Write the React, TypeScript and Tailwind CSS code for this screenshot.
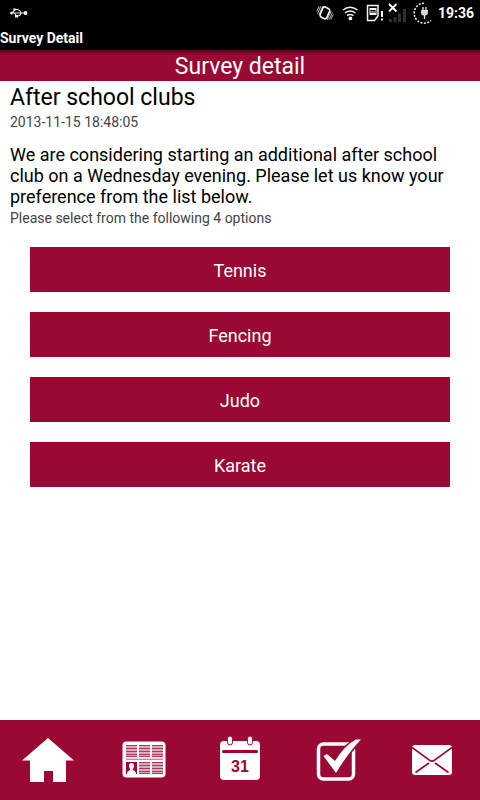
import type { ReactNode } from "react";

const options = ["Tennis", "Fencing", "Judo", "Karate"];

function UsbIcon() {
  return (
    <svg width="20" height="12" viewBox="0 0 20 12" fill="none" stroke="#e4e4e4" strokeWidth="1.1">
      <path d="M3 6H17M4.5 6L7 2.5H9.5Q11.5 3 13.5 6M6.5 6L8.5 9H10Q12 9 13 6.5" />
      <path d="M1.5 6L4.5 4V8Z" fill="#f0f0f0" stroke="none" />
      <circle cx="17.5" cy="6" r="1.9" fill="#ffffff" stroke="none" />
      <circle cx="6.5" cy="2.6" r="1.3" fill="#f0f0f0" stroke="none" />
      <rect x="7" y="8" width="3" height="2.5" fill="#f0f0f0" stroke="none" />
    </svg>
  );
}

function VibrateIcon() {
  return (
    <svg width="18" height="18" viewBox="0 0 18 18" fill="none" stroke="#c8c8c8" strokeWidth="0.9">
      <path d="M6.8 4Q7.8 2.6 9.2 3L13 5Q14.2 6 13.6 7.4L11 13.4Q10 15.2 8.4 14.8L5 13Q3.6 12 4.2 10.4Z" stroke="#f4f4f4" strokeWidth="1.6" />
      <path d="M0.8 7.5L3 2.5M1.6 9.5L4.8 2.2M2.8 11L6.8 2M17.2 10.5L15 15.5M16.4 8.5L13.2 15.8M15.2 7L11.2 16" />
    </svg>
  );
}

function WifiIcon() {
  return (
    <svg width="16" height="16" viewBox="0 0 16 16" fill="none" stroke="#f0f0f0" strokeWidth="1.5">
      <path d="M1 5Q8 -0.5 15.5 5" />
      <path d="M3 8Q8 4 13.5 8" />
      <path d="M5 10.6Q8 8.2 11.5 10.6" />
      <circle cx="8.4" cy="13.4" r="1.9" fill="#ffffff" stroke="none" />
    </svg>
  );
}

function CardAlertIcon() {
  return (
    <svg width="18" height="18" viewBox="0 0 18 18">
      <path d="M1.5 1.5H12V12L8.5 16.5H1.5Z" fill="none" stroke="#f4f4f4" strokeWidth="1.5" />
      <path d="M3.5 4H10.5V6H3.5ZM3.5 6H4.5V9H3.5ZM5.5 7H6.5V9H5.5ZM7.5 7H8.5V9H7.5ZM9.5 6H10.5V9H9.5ZM3.5 9H10.5V11H3.5Z" fill="#f4f4f4" />
      <path d="M15 7H17V13H15ZM15 14.5H17V16.5H15Z" fill="#ffffff" />
    </svg>
  );
}

function SignalIcon() {
  return (
    <svg width="18" height="20" viewBox="0 -2 18 20">
      <path d="M1 14H4V17H1ZM5.5 12H8.5V17H5.5ZM10 8.5H13V17H10ZM15 4H18V17H15Z" fill="#303030" />
      <path d="M1 -1L8.5 6.5M8.5 -1L1 6.5" stroke="#ffffff" strokeWidth="1.9" />
    </svg>
  );
}

function ChargeIcon() {
  return (
    <svg width="22" height="22" viewBox="0 0 22 22">
      <path d="M12 1.2A10 10 0 1 0 19 18.5" fill="none" stroke="#f0f0f0" strokeWidth="1.5" strokeDasharray="2 1.4" />
      <path d="M9 8H16V10Q16 13.5 13.4 13.5H11.6Q9 13.5 9 10Z" fill="#d8d8d8" />
      <path d="M11 5V8M14 5V8M12.5 13V17" stroke="#e8e8e8" strokeWidth="1.3" />
    </svg>
  );
}

function HomeIcon() {
  return (
    <svg width="52" height="46" viewBox="0 0 52 46" fill="#ffffff">
      <path d="M26 1L52 23.5H44V45H31V34H22V45H8V23.5H0Z" />
    </svg>
  );
}

function NewsIcon() {
  return (
    <svg width="44" height="38" viewBox="0 0 44 38">
      <rect x="0.5" y="0.5" width="43" height="36" rx="4" fill="#ffffff" />
      <g fill="#9a0834" fillOpacity="0.35">
        <path d="M4 4H15V16H4ZM17 4H28V16H17ZM30 4H41V16H30Z" />
        <path d="M17 21H28V33H17ZM30 21H41V33H30Z" />
      </g>
      <g stroke="#9a0834" strokeOpacity="0.7" strokeWidth="1">
        <path d="M4 4.5H15M4 7.5H15M4 10.5H15M4 13.5H15M4 15.5H15" />
        <path d="M17 4.5H28M17 7.5H28M17 10.5H28M17 13.5H28M17 15.5H28" />
        <path d="M30 4.5H41M30 7.5H41M30 10.5H41M30 13.5H41M30 15.5H41" />
        <path d="M4 18.2H41" />
        <path d="M17 21.5H28M17 24.5H28M17 27.5H28M17 30.5H28M17 32.5H28" />
        <path d="M30 21.5H41M30 24.5H41M30 27.5H41M30 30.5H41M30 32.5H41" />
      </g>
      <rect x="4" y="21" width="11" height="12" fill="#9a0834" />
      <path d="M7 24.5Q7 22 9.5 22T12 24.5Q12 27 10.8 28V29Q14 30 14 33H5Q5 30 8.2 29V28Q7 27 7 24.5Z" fill="#ffffff" />
    </svg>
  );
}

function CalendarIcon() {
  return (
    <svg width="40" height="50" viewBox="0 0 40 50">
      <rect x="0" y="6" width="40" height="39" rx="4" fill="#ffffff" />
      <rect x="7.5" y="1" width="5" height="9" rx="2.5" fill="#ffffff" stroke="#9a0834" strokeWidth="1" />
      <rect x="27.5" y="1" width="5" height="9" rx="2.5" fill="#ffffff" stroke="#9a0834" strokeWidth="1" />
      <path d="M3.5 16.5H36.5" stroke="#9a0834" strokeWidth="3" strokeLinecap="round" />
      <text x="20" y="37" textAnchor="middle" fill="#9a0834" className="font-['Liberation_Sans',sans-serif] text-[16px] font-bold">
        31
      </text>
    </svg>
  );
}

function SurveyIcon() {
  return (
    <svg width="50" height="46" viewBox="-4 0 50 46">
      <rect x="3.5" y="7" width="35" height="35" rx="5" fill="none" stroke="#ffffff" strokeWidth="3.5" />
      <path d="M8.5 19L12 17L20 24Q30 8 41 2.5H46Q33 16 21 36Z" fill="#ffffff" stroke="#9a0834" strokeWidth="3" strokeLinejoin="round" />
      <path d="M8.5 19L12 17L20 24Q30 8 41 2.5H46Q33 16 21 36Z" fill="#ffffff" />
    </svg>
  );
}

function MailIcon() {
  return (
    <svg width="40" height="30" viewBox="0 0 40 30">
      <rect width="40" height="30" rx="3" fill="#ffffff" />
      <path d="M0 2.5L17 14.8Q20 17.5 23 14.8L40 2.5M3.5 27.5L17 18M36.5 27.5L23 18" fill="none" stroke="#9a0834" strokeWidth="1.7" />
    </svg>
  );
}

const tabs: { label: string; icon: ReactNode }[] = [
  { label: "Home", icon: <HomeIcon /> },
  { label: "News", icon: <NewsIcon /> },
  { label: "Calendar", icon: <CalendarIcon /> },
  { label: "Surveys", icon: <SurveyIcon /> },
  { label: "Messages", icon: <MailIcon /> },
];

export default function App() {
  return (
    <div className="flex min-h-screen flex-col bg-white font-[Roboto,sans-serif] text-black">
      <div className="bg-black text-white">
        <div className="flex h-[26px] items-center pr-1.5 pl-2">
          <UsbIcon />
          <div className="ml-auto flex items-center gap-1">
            <div className="flex items-center gap-2">
              <VibrateIcon />
              <WifiIcon />
              <CardAlertIcon />
            </div>
            <div className="flex items-center gap-1.5">
              <SignalIcon />
              <ChargeIcon />
            </div>
            <span className="text-[14px] leading-6 font-bold">19:36</span>
          </div>
        </div>
        <div className="h-6 text-[14px] leading-6 font-bold">Survey Detail</div>
      </div>

      <header className="h-[31px] bg-[#9a0834] bg-linear-to-b from-[#5c041f] to-[#9a0834] to-15% text-center text-white">
        <h1 className="text-[23px] leading-[34px]">Survey detail</h1>
      </header>

      <main className="flex-1 px-2.5 pt-1">
        <h2 className="text-[23px] leading-[26px]">After school clubs</h2>
        <p className="text-[14px] leading-[22px] text-[#444444]">2013-11-15 18:48:05</p>
        <p className="mt-[11px] text-[18px] leading-[21px]">
          We are considering starting an additional after school club on a Wednesday evening. Please let us know your
          preference from the list below.
        </p>
        <p className="text-[14px] leading-[22px] text-[#444444]">Please select from the following 4 options</p>
        <div className="mt-[18px] flex flex-col gap-5 px-5">
          {options.map((option) => (
            <button key={option} type="button" className="h-[45px] bg-[#9a0834] pt-[3px] text-[18px] leading-6 text-white">
              {option}
            </button>
          ))}
        </div>
      </main>

      <nav className="grid h-20 grid-cols-5 bg-[#9a0834]">
        {tabs.map((tab) => (
          <button key={tab.label} type="button" aria-label={tab.label} className="flex items-center justify-center">
            {tab.icon}
          </button>
        ))}
      </nav>
    </div>
  );
}
